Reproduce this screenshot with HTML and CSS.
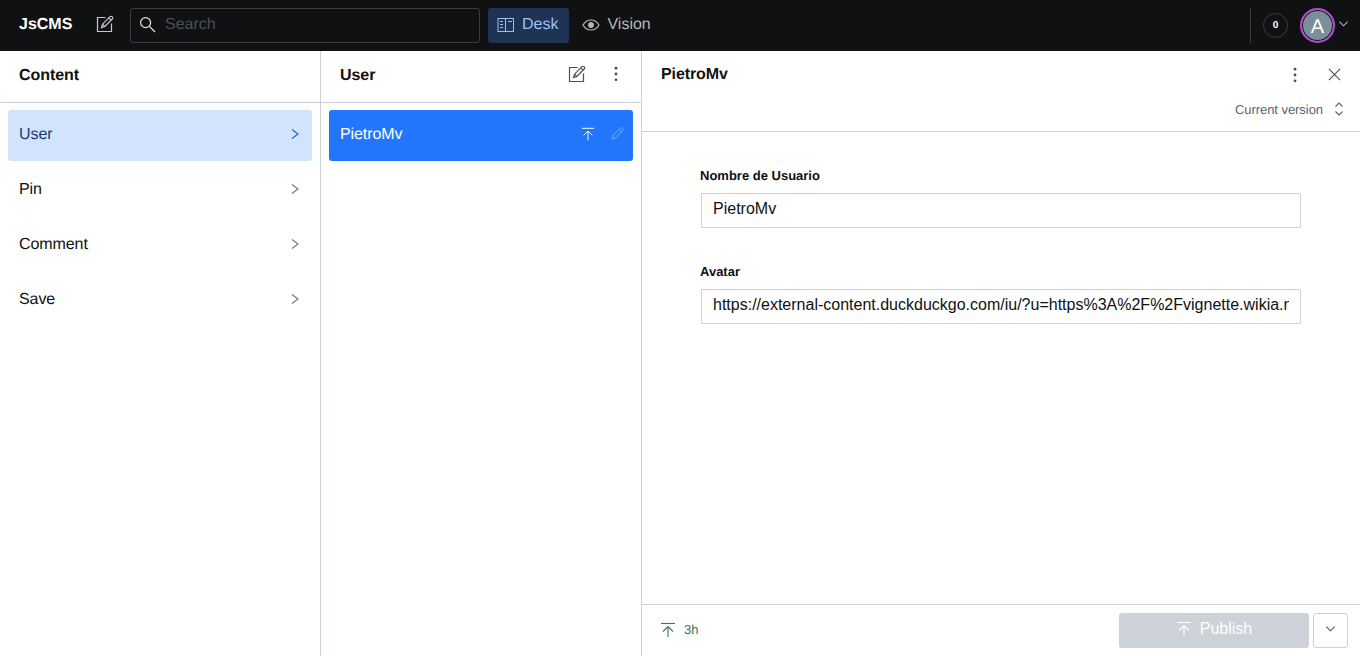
FILE: index.html
```html
<!DOCTYPE html>
<html lang="en">
<head>
    <meta charset="UTF-8">
    <title>JsCMS</title>
    <link rel="stylesheet" href="styles.css">
</head>
<body>
    <svg class="sprites" width="0" height="0">
        <symbol id="i-edit" viewBox="0 0 18 18" fill="none" stroke="currentColor" stroke-width="1.2">
            <path d="M9.5 2.5H1.5v14h14V8.5"/>
            <path d="M5.5 12.6l1-3.4L14 1.7c.6-.6 1.500-.6 2 0l.3.3c.6.6.6 1.400 0 2l-7.500 7.500z"/>
            <path d="M12.800 2.900l2.300 2.300M6.500 9.200l2.300 2.400"/>
        </symbol>
        <symbol id="i-pencil" viewBox="0 0 14 14" fill="none" stroke="currentColor" stroke-width="1.100">
            <path d="M1.500 12.500l1-3.600L10.300 1.100c.6-.6 1.400-.6 2 0l.6.6c.6.6.6 1.400 0 2L5.100 11.500z"/>
            <path d="M2.500 8.900l2.600 2.600M9 2.500l2.500 2.500"/>
        </symbol>
        <symbol id="i-publish" viewBox="0 0 16 16" fill="none" stroke="currentColor" stroke-width="1.1">
            <path d="M1 1.500h14"/>
            <path d="M8 15V4.500M3 9.500l5-5 5 5"/>
        </symbol>
        <symbol id="i-right" viewBox="0 0 10 14" fill="none" stroke="currentColor" stroke-width="1.100">
            <path d="M2 2.500l6 4.500-6 4.500"/>
        </symbol>
        <symbol id="i-down" viewBox="0 0 12 8" fill="none" stroke="currentColor" stroke-width="1.100">
            <path d="M1.500 1.500L6 6l4.500-4.500"/>
        </symbol>
        <symbol id="i-dots" viewBox="0 0 4 16" fill="currentColor">
            <circle cx="2" cy="2.200" r="1.400"/>
            <circle cx="2" cy="8" r="1.400"/>
            <circle cx="2" cy="13.800" r="1.400"/>
        </symbol>
    </svg>

    <header class="topbar">
        <span class="brand">JsCMS</span>
        <button class="top-icon">
            <svg class="icon-18"><use href="#i-edit"/></svg>
        </button>
        <div class="search">
            <svg class="search-icon" viewBox="0 0 18 18" fill="none" stroke="currentColor" stroke-width="1.300">
                <circle cx="7" cy="7" r="5.300"/>
                <path d="M11 11l6 6"/>
            </svg>
            <span class="search-text">Search</span>
        </div>
        <a class="tool tool-active">
            <svg class="tool-icon" viewBox="0 0 18 18" fill="none" stroke="currentColor" stroke-width="1">
                <rect x="1" y="2.500" width="15.500" height="13"/>
                <path d="M8.500 2.500v13M3 5.500h3M3 8.500h3M3 11.500h3M11 5.500h4"/>
            </svg>
            <span class="tool-label">Desk</span>
        </a>
        <a class="tool">
            <svg class="tool-icon" viewBox="0 0 18 18" fill="none" stroke="currentColor" stroke-width="1.200">
                <path d="M1 9c2-3.500 4.800-5 8-5s6 1.500 8 5c-2 3.500-4.800 5-8 5s-6-1.500-8-5z"/>
                <circle cx="9" cy="9" r="2.300" fill="currentColor"/>
            </svg>
            <span class="tool-label">Vision</span>
        </a>
        <div class="topbar-right">
            <span class="count">0</span>
            <span class="avatar">A</span>
            <svg class="avatar-caret"><use href="#i-down"/></svg>
        </div>
    </header>

    <main class="panes">
        <section class="pane pane-list">
            <div class="pane-head"><h2>Content</h2></div>
            <ul class="type-list">
                <li class="type-item selected">User <svg class="chevron"><use href="#i-right"/></svg></li>
                <li class="type-item">Pin <svg class="chevron"><use href="#i-right"/></svg></li>
                <li class="type-item">Comment <svg class="chevron"><use href="#i-right"/></svg></li>
                <li class="type-item">Save <svg class="chevron"><use href="#i-right"/></svg></li>
            </ul>
        </section>

        <section class="pane pane-list">
            <div class="pane-head">
                <h2>User</h2>
                <div class="head-actions">
                    <svg class="icon-18"><use href="#i-edit"/></svg>
                    <svg class="dots"><use href="#i-dots"/></svg>
                </div>
            </div>
            <ul class="type-list">
                <li class="doc-item">
                    PietroMv
                    <span class="doc-icons">
                        <svg class="icon-14"><use href="#i-publish"/></svg>
                        <svg class="icon-14 faded"><use href="#i-pencil"/></svg>
                    </span>
                </li>
            </ul>
        </section>

        <section class="pane pane-doc">
            <div class="doc-head">
                <div class="doc-title">
                    <h2>PietroMv</h2>
                    <div class="head-actions">
                        <svg class="dots"><use href="#i-dots"/></svg>
                        <svg class="close" viewBox="0 0 14 14" fill="none" stroke="currentColor" stroke-width="1.200">
                            <path d="M1 1l12 12M13 1L1 13"/>
                        </svg>
                    </div>
                </div>
                <div class="version">
                    Current version
                    <svg class="updown" viewBox="0 0 10 14" fill="none" stroke="currentColor" stroke-width="1.100">
                        <path d="M1.500 4.500L5 1l3.500 3.500M1.500 9.500L5 13l3.500-3.500"/>
                    </svg>
                </div>
            </div>
            <form class="doc-form">
                <div class="field">
                    <label for="username">Nombre de Usuario</label>
                    <input id="username" type="text" value="PietroMv">
                </div>
                <div class="field">
                    <label for="avatar">Avatar</label>
                    <input id="avatar" type="text" value="https://external-content.duckduckgo.com/iu/?u=https%3A%2F%2Fvignette.wikia.nocookie.net%2Fbleach">
                </div>
            </form>
            <footer class="doc-foot">
                <span class="status">
                    <svg class="icon-16"><use href="#i-publish"/></svg>
                    3h
                </span>
                <div class="foot-actions">
                    <button class="publish" type="button">
                        <svg class="icon-16"><use href="#i-publish"/></svg>
                        Publish
                    </button>
                    <button class="more" type="button"><svg class="more-caret"><use href="#i-down"/></svg></button>
                </div>
            </footer>
        </section>
    </main>
</body>
</html>
```

FILE: styles.css
```css
* {
    box-sizing: border-box;
}
html, body {
    height: 100%;
}
body {
    margin: 0;
    display: flex;
    flex-direction: column;
    overflow: hidden;
    font-family: 'Liberation Sans', Arial, sans-serif;
    font-size: 16px;
    text-rendering: geometricPrecision;
    -webkit-font-smoothing: antialiased;
    color: #101112;
    background: #fff;
}
.sprites {
    position: absolute;
}
h2 {
    margin: 0;
    font-size: 16px;
    font-weight: 700;
}
ul {
    list-style: none;
    margin: 0;
    padding: 0;
}

.topbar {
    flex: none;
    display: flex;
    align-items: center;
    height: 51px;
    padding: 8px 11px 8px 19px;
    background: #101112;
    color: #fff;
}
.brand {
    width: 77px;
    padding-bottom: 2px;
    font-size: 16px;
    font-weight: 700;
}
.top-icon {
    display: flex;
    width: 18px;
    height: 18px;
    margin-bottom: 4px;
    padding: 0;
    border: 0;
    background: none;
    color: #c4c8cf;
}
.icon-18 {
    width: 18px;
    height: 18px;
}
.icon-16 {
    width: 16px;
    height: 16px;
}
.icon-14 {
    width: 14px;
    height: 14px;
}
.search {
    display: flex;
    align-items: center;
    width: 350px;
    height: 35px;
    margin: 0 4px 0 16px;
    padding: 0 0 2px 8px;
    border: 1px solid #3a3d42;
    border-radius: 3px;
    color: #e4e6e9;
}
.search-icon {
    width: 17px;
    height: 17px;
}
.search-text {
    margin-left: 9px;
    color: #4d5057;
}
.tool {
    display: flex;
    align-items: center;
    gap: 7px;
    height: 35px;
    margin-left: 4px;
    padding: 0 11px 2px 9px;
    border-radius: 3px;
    color: #b5b8bd;
}
.tool-active {
    background: #1f3454;
    color: #9cc0f5;
}
.tool-icon {
    width: 18px;
    height: 18px;
}
.topbar-right {
    display: flex;
    align-items: center;
    height: 35px;
    margin-left: auto;
    padding-left: 12px;
    border-left: 1px solid #3a3d42;
}
.count {
    display: flex;
    align-items: center;
    justify-content: center;
    width: 25px;
    height: 25px;
    border: 1px solid #3a3d42;
    border-radius: 50%;
    font-size: 10px;
    font-weight: 700;
}
.avatar {
    display: flex;
    align-items: center;
    justify-content: center;
    width: 35px;
    height: 35px;
    margin-left: 12px;
    padding-top: 3px;
    border: 2px solid #b54ad4;
    border-radius: 50%;
    background: #7a8f99;
    box-shadow: inset 0 0 0 1px #101112;
    font-size: 20px;
}
.avatar-caret {
    width: 11px;
    height: 8px;
    margin: 0 0 3px 3px;
    color: #b5b8bd;
}

.panes {
    flex: 1;
    display: flex;
    min-height: 0;
}
.pane {
    display: flex;
    flex-direction: column;
}
.pane-list {
    width: 321px;
    border-right: 1px solid #cdd1d8;
}
.pane-doc {
    flex: 1;
    min-width: 0;
}
.pane-head {
    display: flex;
    align-items: center;
    justify-content: space-between;
    height: 52px;
    padding: 0 16px 5px 19px;
    border-bottom: 1px solid #cdd1d8;
}
.pane-head h2 {
    padding-top: 4px;
    letter-spacing: -0.05px;
}
.head-actions {
    display: flex;
    align-items: center;
    color: #4a4f58;
}
.dots {
    width: 4px;
    height: 16px;
    margin: 0 7px 0 28px;
}
.type-list {
    display: flex;
    flex-direction: column;
    gap: 4px;
    padding: 7px 8px;
}
.type-item {
    display: flex;
    align-items: center;
    justify-content: space-between;
    height: 51px;
    padding: 0 12px 1px 11px;
    letter-spacing: -0.08px;
}
.selected {
    background: #d2e3fd;
    border-radius: 3px;
    color: #1c3a72;
}
.chevron {
    width: 10px;
    height: 14px;
    margin-bottom: 3px;
    color: #6e7380;
}
.selected .chevron {
    color: #1f5fd0;
}
.doc-item {
    display: flex;
    align-items: center;
    justify-content: space-between;
    height: 51px;
    padding: 0 9px 1px 11px;
    background: #2276fc;
    border-radius: 3px;
    color: #fff;
    letter-spacing: -0.1px;
}
.doc-icons {
    display: flex;
    align-items: center;
    gap: 15px;
    margin-bottom: 2px;
}
.faded {
    color: #5a98fd;
}

.doc-head {
    flex: none;
    height: 81px;
    border-bottom: 1px solid #cdd1d8;
}
.doc-title {
    display: flex;
    align-items: center;
    justify-content: space-between;
    height: 47px;
    padding: 0 19px;
}
.doc-title h2 {
    letter-spacing: -0.1px;
}
.doc-title .dots {
    margin: 0;
}
.close {
    width: 13px;
    height: 13px;
    margin-left: 31px;
}
.version {
    display: flex;
    align-items: center;
    justify-content: flex-end;
    gap: 11px;
    height: 22px;
    padding-right: 16px;
    font-size: 13px;
    letter-spacing: -0.05px;
    color: #5a5f6a;
}
.updown {
    width: 10px;
    height: 14px;
}
.doc-form {
    flex: 1;
    padding: 37px 59px 0 58px;
}
.field {
    margin-bottom: 37px;
}
.field label {
    display: block;
    margin-bottom: 10px;
    font-size: 13px;
    line-height: 14px;
    font-weight: 700;
}
.field input {
    display: block;
    width: 600px;
    height: 35px;
    margin-left: 1px;
    padding: 0 11px 4px;
    border: 1px solid #cdd1d8;
    border-radius: 1px;
    outline: 0;
    font: inherit;
    color: #101112;
}
.doc-foot {
    flex: none;
    display: flex;
    align-items: center;
    justify-content: space-between;
    height: 52px;
    padding: 0 12px 0 18px;
    border-top: 1px solid #cdd1d8;
}
.status {
    display: flex;
    align-items: center;
    gap: 8px;
    padding-bottom: 2px;
    font-size: 13px;
    color: #2f7d52;
}
.foot-actions {
    display: flex;
    gap: 4px;
}
.publish {
    display: flex;
    align-items: center;
    justify-content: center;
    gap: 8px;
    width: 190px;
    height: 35px;
    padding: 0 0 3px;
    border: 0;
    border-radius: 3px;
    background: #cdd1d8;
    color: #fff;
    font: inherit;
}
.more {
    display: flex;
    align-items: center;
    justify-content: center;
    width: 35px;
    height: 35px;
    padding: 0 0 3px;
    border: 1px solid #cdd1d8;
    border-radius: 3px;
    background: #fff;
    color: #4a4f58;
}
.more-caret {
    width: 11px;
    height: 8px;
}
```
